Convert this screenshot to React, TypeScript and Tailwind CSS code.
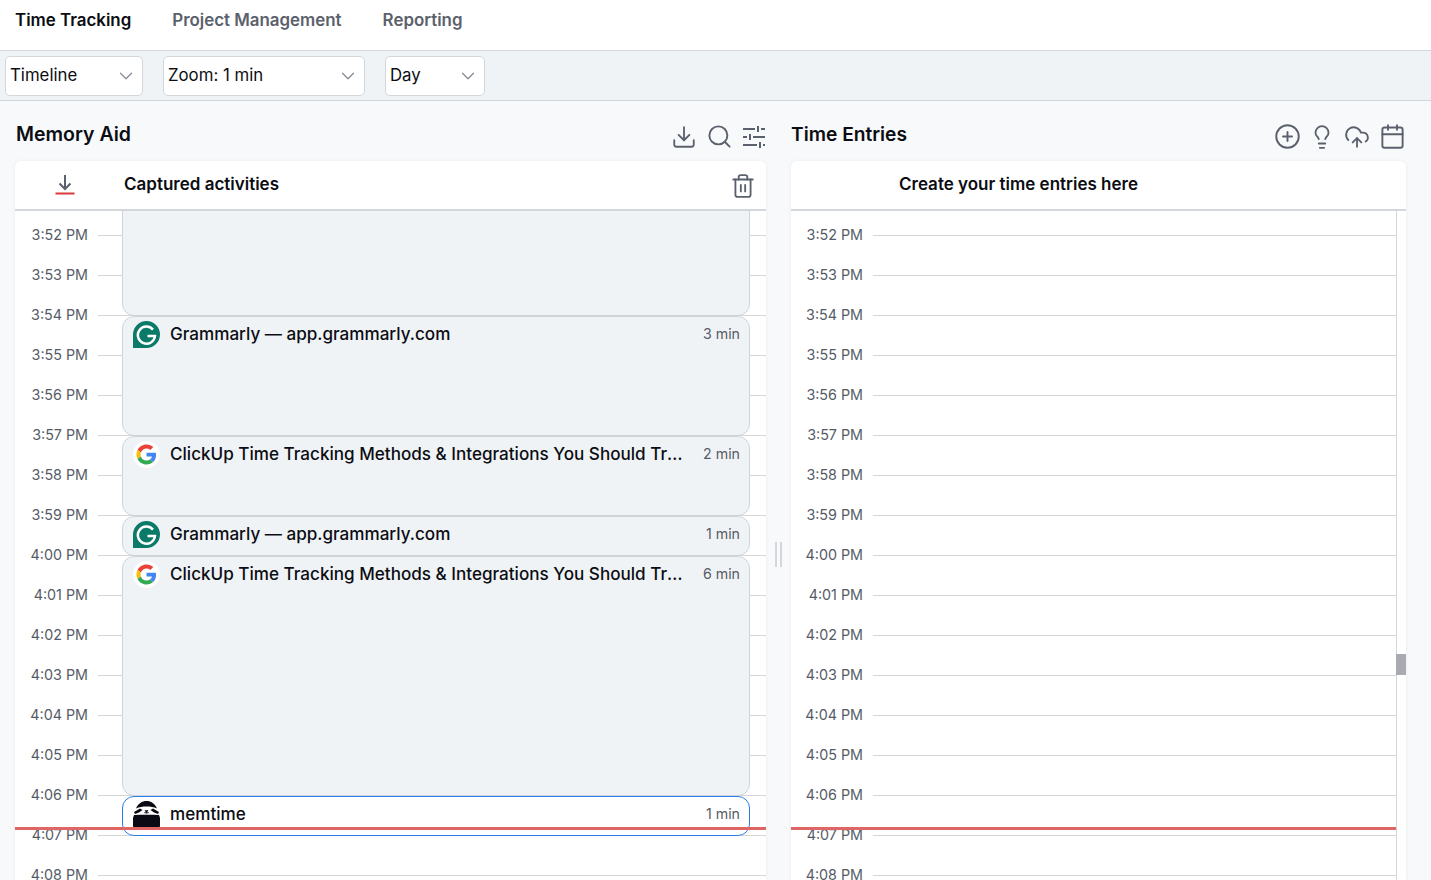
import { ChevronDown, CirclePlus, CloudUpload, Calendar, Download, Lightbulb, Search, Trash2 } from 'lucide-react'

const times = [
  '3:52 PM', '3:53 PM', '3:54 PM', '3:55 PM', '3:56 PM', '3:57 PM', '3:58 PM', '3:59 PM', '4:00 PM',
  '4:01 PM', '4:02 PM', '4:03 PM', '4:04 PM', '4:05 PM', '4:06 PM', '4:07 PM', '4:08 PM',
]

const clickupTitle = 'ClickUp Time Tracking Methods & Integrations You Should Track'

function GrammarlyIcon() {
  return (
    <svg width="27" height="27" viewBox="0 0 27 27">
      <path d="M13.5 0A13.5 13.5 0 1 1 13.5 27H0V13.5A13.5 13.5 0 0 1 13.5 0Z" fill="#0b7a68" />
      <path d="M20 8.6A8.6 8.6 0 1 0 22 15H14.5" fill="none" stroke="#fff" strokeWidth="2.4" />
    </svg>
  )
}

function GoogleIcon() {
  return (
    <svg width="27" height="27" viewBox="0 0 27 27">
      <circle cx="13.5" cy="13.5" r="13.5" fill="#fff" />
      <g transform="translate(3.5 3.5) scale(0.417)">
        <path fill="#EA4335" d="M24 9.5c3.5 0 6.700 1.200 9.200 3.600l6.900-6.900C35.900 2.400 30.500 0 24 0 14.600 0 6.500 5.400 2.600 13.200l8 6.200C12.400 13.700 17.700 9.500 24 9.500z" />
        <path fill="#4285F4" d="M46.900 24.500c0-1.600-.1-3.100-.4-4.500H24v9h12.900c-.6 3-2.200 5.500-4.700 7.200l7.700 6c4.500-4.200 7-10.300 7-17.700z" />
        <path fill="#FBBC05" d="M10.500 28.600c-.5-1.400-.8-3-.8-4.600s.3-3.200.8-4.600l-8-6.200C.9 16.500 0 20.100 0 24s.9 7.500 2.600 10.800l7.900-6.200z" />
        <path fill="#34A853" d="M24 48c6.500 0 11.900-2.100 15.900-5.800l-7.700-6c-2.200 1.500-4.900 2.300-8.200 2.300-6.300 0-11.600-4.200-13.500-9.900l-8 6.200C6.500 42.600 14.600 48 24 48z" />
      </g>
    </svg>
  )
}

function MemtimeIcon() {
  return (
    <svg width="27" height="27" viewBox="0 0 27 27">
      {/* dome */}
      <path d="M3 7.500C5 2.500 9 0 13.500 0S22 2.500 24 7.500C21 6 17 5.500 13.500 5.500S6 6 3 7.500Z" fill="#0a0a14" />
      {/* eye patches */}
      <path d="M1 11L7 7.500L9.500 9L6 11.500L2 13Z M26 11L20 7.500L17.500 9L21 11.500L25 13Z" fill="#0a0a14" />
      {/* nose */}
      <path d="M12 9.500H15L13.500 11.500Z M11 11.500Q13.500 13 16 11.500" fill="#0a0a14" stroke="#0a0a14" strokeWidth="0.6" />
      {/* body */}
      <path d="M1 14C9 13.500 18 13.500 26 14L27 17V25a2 2 0 0 1-2 2H2a2 2 0 0 1-2-2V17Z" fill="#0a0a14" />
    </svg>
  )
}

function TuneIcon() {
  return (
    <svg width="24" height="24" viewBox="0 0 24 24" fill="none" stroke="#5b616c" strokeWidth="2">
      <path d="M1 4H13M16 1V7M19 4H23M1 12H5M8 9V15M11 12H23M1 20H15M18 17V23M21 20H23" />
    </svg>
  )
}

function SelectBox({ label, width }: { label: string; width: string }) {
  return (
    <div className={`flex h-10 items-center justify-between rounded-[5px] border border-[#d3d7dc] bg-white pl-[4px] pr-[5px] text-[16.8px] leading-[36px] text-[#0b0d12] ${width}`}>
      <span className="-translate-y-px">{label}</span>
      <ChevronDown size={22} strokeWidth={1.5} className="text-[#8b9098]" />
    </div>
  )
}

function TimeRows({ labelWidth }: { labelWidth: string }) {
  return (
    <div className="pt-[4px]">
      {times.map(time => (
        <div key={time} className="flex h-10 items-center">
          <span className={`shrink-0 text-right text-[14.3px] text-[#555b66] ${labelWidth}`}>{time}</span>
          <div className="ml-[10px] h-px flex-1 bg-[#d4d6d9]" />
        </div>
      ))}
    </div>
  )
}

function ActivityCard({ height, icon, title, minutes, active }: { height: string; icon?: React.ReactNode; title?: string; minutes?: string; active?: boolean }) {
  return (
    <div className={`flex items-start rounded-xl border pl-[10px] pr-[9px] pt-1 ${height} ${active ? 'border-[#2b7de9] bg-white' : 'border-[#cfd4d9] bg-[#f0f3f6]'}`}>
      {icon}
      {title && <span className="ml-[10px] mt-[1px] w-[513px] truncate text-[17.1px] font-medium leading-[23px] text-[#0b0d12]">{title}</span>}
      {minutes && <span className="ml-auto mt-[3px] text-[14.2px] leading-5 text-[#555b66]">{minutes}</span>}
    </div>
  )
}

export default function App() {
  return (
    <div className="h-[880px] overflow-hidden bg-[#f8f9fb] font-['Inter',sans-serif]">
      {/* Top nav */}
      <nav className="flex h-[51px] items-start gap-[41px] border-b border-[#d3d7dc] bg-white pl-[15px] pt-[8px] text-[16.9px] font-semibold text-[#5b616c]">
        <span className="text-[#0b0d12]">Time Tracking</span>
        <span>Project Management</span>
        <span>Reporting</span>
      </nav>

      {/* Toolbar */}
      <div className="flex h-[50px] items-center gap-5 border-b border-[#d3d7dc] bg-[#f0f3f6] pl-[5px]">
        <SelectBox label="Timeline" width="w-[138px]" />
        <SelectBox label="Zoom: 1 min" width="w-[202px]" />
        <SelectBox label="Day" width="w-[100px]" />
      </div>

      <div className="flex pl-[15px]">
        {/* Memory Aid */}
        <section className="w-[751px]">
          <div className="flex h-[60px] items-start justify-between pt-[20px]">
            <h2 className="pl-px text-[19.5px] font-semibold leading-[26px] text-[#0b0d12]">Memory Aid</h2>
            <div className="mt-[2px] flex items-center gap-[11px] text-[#5b616c]">
              <Download size={26} strokeWidth={1.7} className="-mx-px" />
              <Search size={27} strokeWidth={1.7} className="-mx-[1.5px]" />
              <TuneIcon />
            </div>
          </div>
          <div className="h-[720px] overflow-hidden rounded-t-md bg-white shadow-[0_0_4px_rgba(0,0,0,0.06)]">
            <div className="flex h-[50px] items-center border-b-2 border-[#d3d7dc] pl-[38px] pr-[11px]">
              <svg width="24" height="24" viewBox="0 0 24 24" fill="none">
                <path d="M12 2V16M6.500 10.500L12 16L17.500 10.500" stroke="#5b616c" strokeWidth="2" />
                <path d="M2.500 20.500H21.500" stroke="#d93a3a" strokeWidth="2" />
              </svg>
              <span className="ml-[47px] text-[17px] font-semibold text-[#0b0d12]">Captured activities</span>
              <Trash2 size={26} strokeWidth={1.7} className="-mx-px ml-auto translate-y-[1px] text-[#5b616c]" />
            </div>
            <div className="relative h-[670px] overflow-hidden">
              <TimeRows labelWidth="w-[73px]" />
              <div className="absolute left-[107px] right-[16px] top-[-41px] flex flex-col">
                <ActivityCard height="h-[146px]" />
                <ActivityCard height="h-[120px]" icon={<GrammarlyIcon />} title="Grammarly — app.grammarly.com" minutes="3 min" />
                <ActivityCard height="h-[80px]" icon={<GoogleIcon />} title={clickupTitle} minutes="2 min" />
                <ActivityCard height="h-[40px]" icon={<GrammarlyIcon />} title="Grammarly — app.grammarly.com" minutes="1 min" />
                <ActivityCard height="h-[240px]" icon={<GoogleIcon />} title={clickupTitle} minutes="6 min" />
                <ActivityCard height="h-[40px]" icon={<MemtimeIcon />} title="memtime" minutes="1 min" active />
              </div>
              <div className="absolute left-0 right-0 top-[616px] h-[3px] bg-[#e06666]" />
            </div>
          </div>
        </section>

        {/* Splitter */}
        <div className="flex w-[25px] justify-center pt-[441px]">
          <div className="mr-[1px] flex h-[25px] w-[7px] justify-between">
            <div className="w-[2px] bg-[#d3d7dc]" />
            <div className="w-[2px] bg-[#d3d7dc]" />
          </div>
        </div>

        {/* Time Entries */}
        <section className="w-[615px]">
          <div className="flex h-[60px] items-start justify-between pt-[20px]">
            <h2 className="text-[19.2px] font-semibold leading-[26px] text-[#0b0d12]">Time Entries</h2>
            <div className="mr-[2px] mt-[2px] flex items-center gap-[11px] text-[#5b616c]">
              <CirclePlus size={27} strokeWidth={1.7} className="-mx-[1.5px]" />
              <Lightbulb size={26} strokeWidth={1.7} className="-mx-px" />
              <CloudUpload size={26} strokeWidth={1.7} className="-mx-px" />
              <Calendar size={27} strokeWidth={1.7} className="-mx-[1.5px]" />
            </div>
          </div>
          <div className="h-[720px] overflow-hidden rounded-t-md bg-white shadow-[0_0_4px_rgba(0,0,0,0.06)]">
            <div className="flex h-[50px] items-center border-b-2 border-[#d3d7dc] pl-[108px]">
              <span className="text-[17px] font-semibold text-[#0b0d12]">Create your time entries here</span>
            </div>
            <div className="relative h-[670px] overflow-hidden pr-[9px]">
              <div className="border-r border-[#d4d6d9]">
                <TimeRows labelWidth="w-[72px]" />
              </div>
              <div className="absolute left-0 right-[10px] top-[616px] h-[3px] bg-[#e06666]" />
              <div className="absolute right-0 top-[443px] h-[21px] w-[10px] bg-[#a8abb0]" />
            </div>
          </div>
        </section>
      </div>
    </div>
  )
}
